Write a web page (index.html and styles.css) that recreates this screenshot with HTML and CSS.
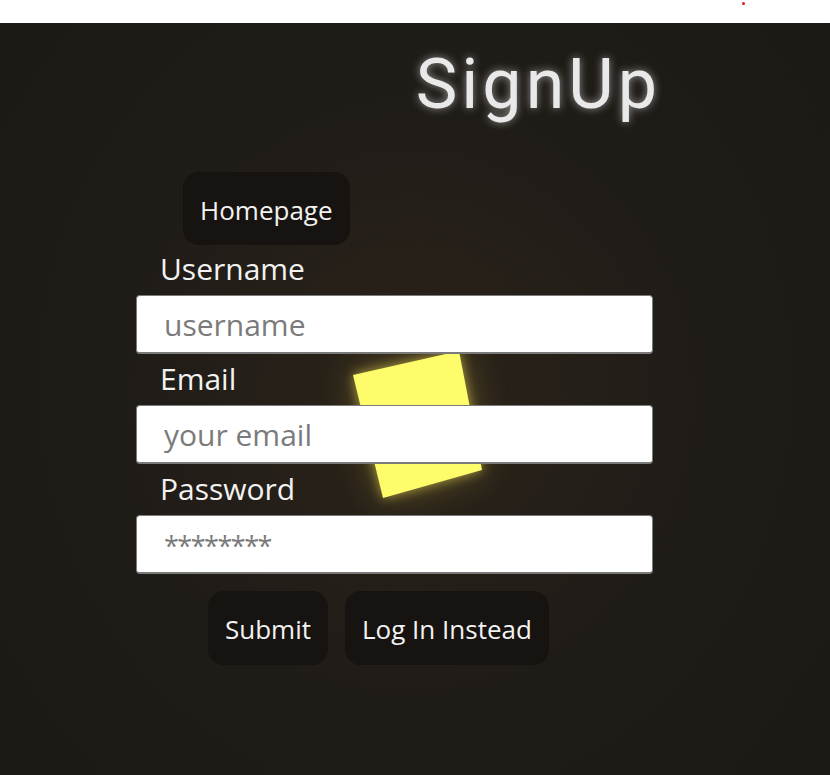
FILE: index.html
```html
<!DOCTYPE html>
<html lang="en">
<head>
<meta charset="utf-8">
<title>SignUp</title>
<link rel="stylesheet" href="styles.css">
</head>
<body>
<div class="topbar"><span class="dot"></span></div>
<main class="stage">
  <div class="shape-glow"><div class="shape"></div></div>
  <div class="panel">
    <h1 class="title">SignUp</h1>
    <a class="btn btn-home" href="#">Homepage</a>
    <form class="form">
      <label class="field-label" for="u">Username</label>
      <input class="field" id="u" type="text" placeholder="username">
      <label class="field-label" for="e">Email</label>
      <input class="field" id="e" type="email" placeholder="your email">
      <label class="field-label" for="p">Password</label>
      <input class="field field-password" id="p" type="password" placeholder="********">
      <div class="actions">
        <button class="btn" type="button">Submit</button>
        <button class="btn" type="button">Log In Instead</button>
      </div>
    </form>
  </div>
</main>
</body>
</html>
```
FILE: styles.css
```css
html, body {
  margin: 0;
  padding: 0;
}
body {
  background: #ffffff;
  font-family: "Open Sans", "Noto Sans", sans-serif;
  overflow: hidden;
}
.topbar {
  height: 23px;
  background: #ffffff;
  position: relative;
}
.dot {
  position: absolute;
  left: 742px;
  top: 2px;
  width: 3px;
  height: 3px;
  border-radius: 50%;
  background: #f0101e;
}
.stage {
  position: relative;
  height: 752px;
  background:
    radial-gradient(ellipse 420px 420px at 410px 380px, rgba(60, 45, 25, 0.35), rgba(60, 45, 25, 0) 70%),
    radial-gradient(ellipse 560px 620px at 415px 360px, #221e19 0%, #1f1b17 60%, #1c1915 100%);
}
.shape-glow {
  position: absolute;
  left: 353px;
  top: 328px;
  width: 129px;
  height: 147px;
  filter: drop-shadow(0 0 6px rgba(255, 240, 90, 0.55)) drop-shadow(0 0 18px rgba(230, 200, 70, 0.3));
}
.shape {
  width: 100%;
  height: 100%;
  background: #fffc6c;
  clip-path: polygon(0 24px, 106px 0, 129px 119px, 30px 147px);
}
.panel {
  position: relative;
  width: 517px;
  margin-left: 136px;
  display: flex;
  flex-direction: column;
  align-items: flex-start;
}
.title {
  align-self: stretch;
  margin: 20px -8px 0 0;
  text-align: right;
  font-family: Roboto, sans-serif;
  font-weight: 400;
  font-size: 70px;
  line-height: 82px;
  letter-spacing: 4px;
  color: #e9e9e9;
  text-shadow: 0 0 8px rgba(255, 255, 255, 0.55);
}
.btn {
  display: inline-block;
  box-sizing: border-box;
  height: 74px;
  padding: 2px 17px 0;
  border: none;
  border-radius: 16px;
  background: #161310;
  color: #f2f2f2;
  font-family: "Open Sans", "Noto Sans", sans-serif;
  font-size: 26px;
  line-height: 72px;
  text-decoration: none;
  cursor: pointer;
}
.btn-home {
  margin: 47px 0 0 47px;
  height: 73px;
  line-height: 70px;
  padding-top: 3px;
}
.form {
  align-self: stretch;
  display: flex;
  flex-direction: column;
  margin-top: 6px;
}
.field-label {
  margin: 0 0 9px 24px;
  font-size: 30px;
  line-height: 35px;
  color: #f2f2f2;
}
.field + .field-label {
  margin-top: 7px;
}
.field {
  box-sizing: border-box;
  width: 517px;
  height: 59px;
  margin: 0;
  padding: 0 0 0 27px;
  border: 1px solid #7a7a7a;
  border-bottom-width: 2px;
  border-radius: 4px;
  background: #ffffff;
  font-family: "Open Sans", "Noto Sans", sans-serif;
  font-size: 30px;
  color: #222;
  position: relative;
  z-index: 1;
}
.field::placeholder {
  color: #7b7b7b;
}
.field-password::placeholder {
  font-size: 27px;
  letter-spacing: -1.5px;
}
.actions {
  display: flex;
  gap: 17px;
  margin: 17px 0 0 72px;
}
```
